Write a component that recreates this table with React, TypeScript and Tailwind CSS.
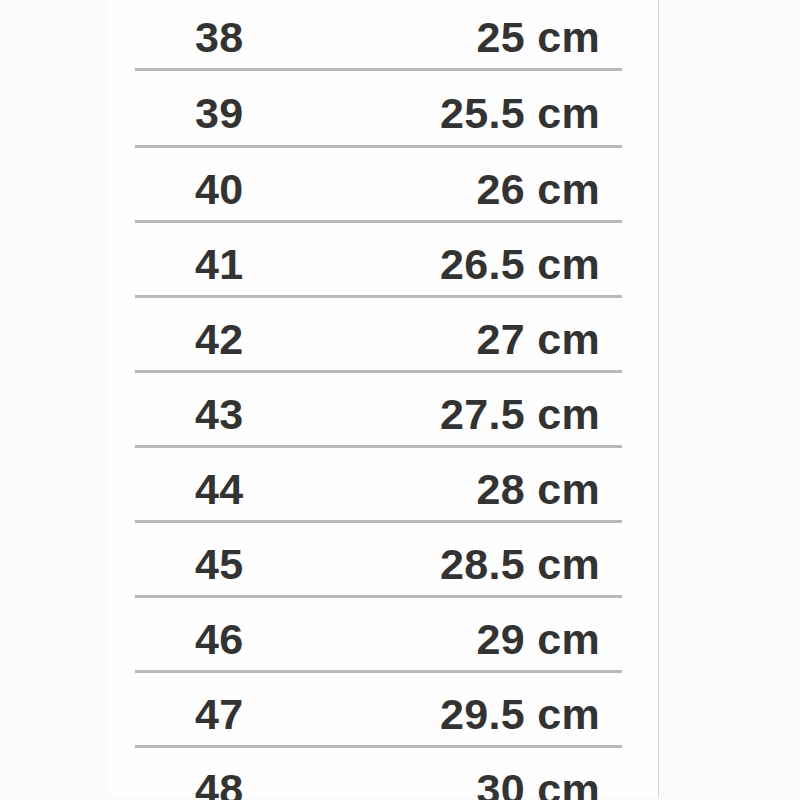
const ROWS: [string, string][] = [
  ["38", "25 cm"],
  ["39", "25.5 cm"],
  ["40", "26 cm"],
  ["41", "26.5 cm"],
  ["42", "27 cm"],
  ["43", "27.5 cm"],
  ["44", "28 cm"],
  ["45", "28.5 cm"],
  ["46", "29 cm"],
  ["47", "29.5 cm"],
  ["48", "30 cm"],
];

// first two rows in the source image are a touch uneven
const rowHeight = (i: number) => (i === 0 ? "h-[73px] pt-[8px]" : i === 1 ? "h-[77px] pt-[10px]" : "h-[75px] pt-[10px]");

export default function App() {
  return (
    <div className="h-[800px] w-[800px] overflow-hidden bg-[#fbfbfb] font-['Liberation_Sans',Arial,sans-serif]">
      <div className="ml-[110px] h-full w-[549px] border-r border-[#d6d6d6] bg-[#fefefe] pl-[25px] pr-[36px]">
        {/* size table */}
        <div className="-mt-[2px]">
          {ROWS.map(([eu, cm], i) => (
            <div
              key={eu}
              className={`flex items-center justify-between border-b-[3px] border-[#b9b9b9] pl-[60px] pr-[22px] text-[43px] font-bold leading-none tracking-[0.3px] text-[#333333] ${rowHeight(i)}`}
            >
              <span>{eu}</span>
              <span>{cm}</span>
            </div>
          ))}
        </div>
      </div>
    </div>
  );
}
